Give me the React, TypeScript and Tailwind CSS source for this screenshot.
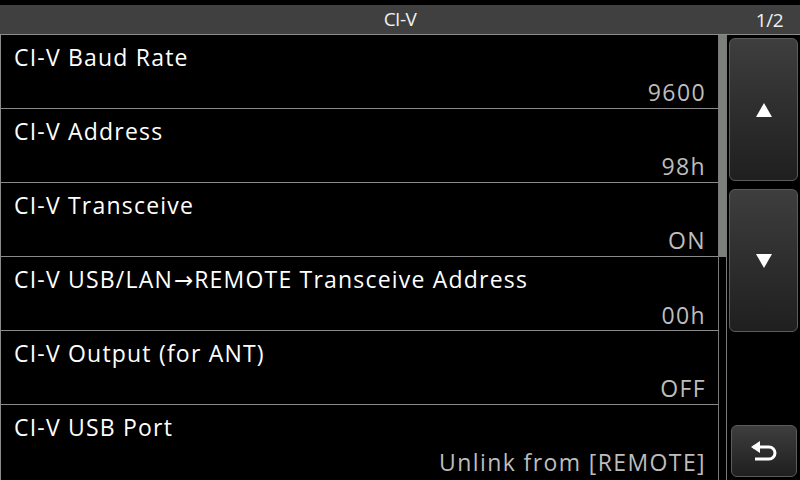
import React from "react";

const Arrow = () => (
  <span style={{ fontFamily: '"DejaVu Sans", sans-serif' }} className="text-[23px] tracking-normal px-[1px]">
    {"\u2192"}
  </span>
);

const rows: [React.ReactNode, string][] = [
  ["CI-V Baud Rate", "9600"],
  ["CI-V Address", "98h"],
  ["CI-V Transceive", "ON"],
  [
    <>
      CI-V USB/LAN
      <Arrow />
      REMOTE Transceive Address
    </>,
    "00h",
  ],
  ["CI-V Output (for ANT)", "OFF"],
  ["CI-V USB Port", "Unlink from [REMOTE]"],
];

const btn =
  "rounded-[6px] border border-[#5c5c5c] bg-gradient-to-b from-[#3e3e3e] to-[#1f1f1f] flex items-center justify-center";

export default function App() {
  return (
    <div
      className="w-[800px] h-[480px] bg-black overflow-hidden flex flex-col"
      style={{ fontFamily: '"Open Sans", "Noto Sans", sans-serif' }}
    >
      <div className="mt-[5px] h-[30px] shrink-0 bg-[#404040] border-b border-[#8c8c8c] relative flex items-center justify-center text-[#f0f0f0] text-[19px]">
        <span className="tracking-[-0.5px]">CI-V</span>
        <span className="absolute right-[17px] top-[1px] tracking-[-0.5px]">1/2</span>
      </div>
      <div className="flex flex-1 min-h-0">
        <div className="w-[718px] border-l border-[#8a8a8a] flex flex-col">
          {rows.map(([label, value], i) => (
            <div
              key={i}
              className={`h-[74px] shrink-0 flex flex-col pl-[13px] pr-[12px] ${
                i < rows.length - 1 ? "border-b border-[#8a8a8a]" : ""
              }`}
            >
              <div className="text-white text-[23px] tracking-[1.2px] leading-[30px] mt-[7px] whitespace-nowrap">
                {label}
              </div>
              <div className="text-[#bdbdbd] text-[23px] tracking-[1.4px] leading-[30px] mt-[5px] text-right whitespace-nowrap">
                {value}
              </div>
            </div>
          ))}
        </div>
        <div className="w-[9px] border-x border-[#7a7a7a] flex flex-col">
          <div className="h-[222px] bg-[#7b807b]" />
        </div>
        <div className="flex-1 flex flex-col pl-[2px] pr-[2px]">
          <div className={`${btn} mt-[3px] h-[143px]`}>
            <svg width="18" height="16" viewBox="0 0 18 16">
              <polygon points="9,1 17,15 1,15" fill="white" />
            </svg>
          </div>
          <div className={`${btn} mt-[8px] h-[143px]`}>
            <svg width="18" height="16" viewBox="0 0 18 16">
              <polygon points="1,1 17,1 9,15" fill="white" />
            </svg>
          </div>
          <div className="flex-1" />
          <div className={`${btn} ml-[2px] mr-[1px] mb-[3px] h-[52px]`}>
            <svg width="30" height="22" viewBox="0 0 30 22">
              <path
                d="M4 7 H20 A6 6 0 0 1 20 19 H6"
                fill="none"
                stroke="white"
                strokeWidth="3"
              />
              <polygon points="2,7 11,1 11,13" fill="white" />
            </svg>
          </div>
        </div>
      </div>
    </div>
  );
}
